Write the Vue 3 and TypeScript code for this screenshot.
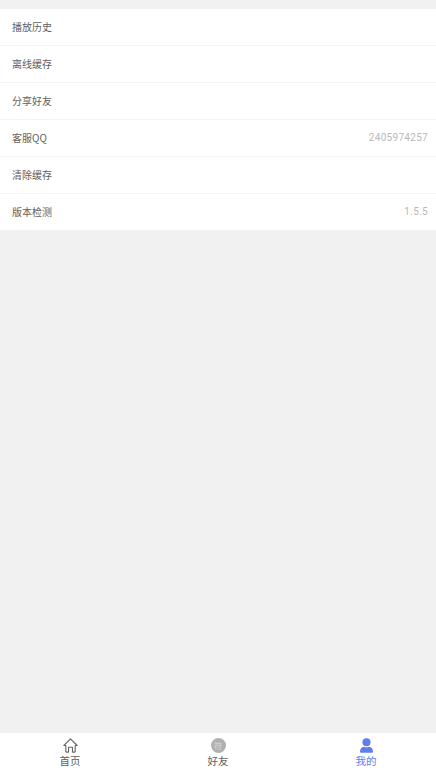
<script setup lang="ts">
const rows: { label: string; value?: string }[] = [
  { label: '播放历史' },
  { label: '离线缓存' },
  { label: '分享好友' },
  { label: '客服QQ', value: '2405974257' },
  { label: '清除缓存' },
  { label: '版本检测', value: '1.5.5' },
]
</script>

<template>
  <div class="page">
    <main class="content">
      <div class="list">
        <div v-for="r in rows" :key="r.label" class="row">
          <span class="label">{{ r.label }}</span>
          <span v-if="r.value" class="value">{{ r.value }}</span>
        </div>
      </div>
    </main>
    <nav class="tabbar">
      <div class="tab">
        <svg class="icon" viewBox="0 0 16 16" fill="none" stroke="#666" stroke-width="1.2" stroke-linejoin="round">
          <path d="M.9 8 8 1l7.100 7H13v6.400a.6.6 0 0 1-.6.6h-2.300V9.800H5.900V15H3.600a.6.6 0 0 1-.6-.6V8Z" />
        </svg>
        <span>首页</span>
      </div>
      <div class="tab">
        <span class="badge">符</span>
        <span>好友</span>
      </div>
      <div class="tab active">
        <svg class="icon" viewBox="0 0 16 16" fill="#5f7cf0">
          <circle cx="8" cy="4.600" r="4.300" />
          <path d="M2 15.600c-.6 0-1-.4-1-1 0-3 1.800-5 4.200-5.400 1.700 1 3.900 1 5.600 0 2.400.4 4.200 2.400 4.200 5.400 0 .6-.4 1-1 1Z" />
        </svg>
        <span>我的</span>
      </div>
    </nav>
  </div>
</template>

<style scoped>
.page {
  width: 436px;
  height: 771px;
  display: flex;
  flex-direction: column;
  background: #f1f1f1;
  font-family: "Noto Sans CJK SC", "Roboto", sans-serif;
  overflow: hidden;
}
.content {
  flex: 1;
  padding-top: 9px;
}
.list {
  background: #fff;
}
.row {
  height: 35px;
  display: flex;
  align-items: center;
  justify-content: space-between;
  padding: 0 8px 1px 12px;
  border-bottom: 1px solid #f3f3f3;
}
.row:last-child {
  border-bottom: none;
}
.label {
  font-size: 10px;
  color: #606060;
}
.value {
  font-family: "Roboto", sans-serif;
  font-size: 10px;
  letter-spacing: 0.3px;
  color: #b8b8b8;
}
.tabbar {
  height: 38px;
  display: flex;
  justify-content: center;
  background: #fff;
}
.tab {
  flex: 0 0 148px;
  display: flex;
  flex-direction: column;
  align-items: center;
  padding-top: 5px;
  font-size: 10.5px;
  line-height: 16px;
  color: #606060;
}
.tab.active {
  color: #5f7cf0;
}
.icon {
  width: 15px;
  height: 15px;
  display: block;
}
.badge {
  width: 15px;
  height: 15px;
  border-radius: 50%;
  background: #b0b0b0;
  color: #ddd;
  font-size: 8px;
  line-height: 15px;
  text-align: center;
}
</style>
